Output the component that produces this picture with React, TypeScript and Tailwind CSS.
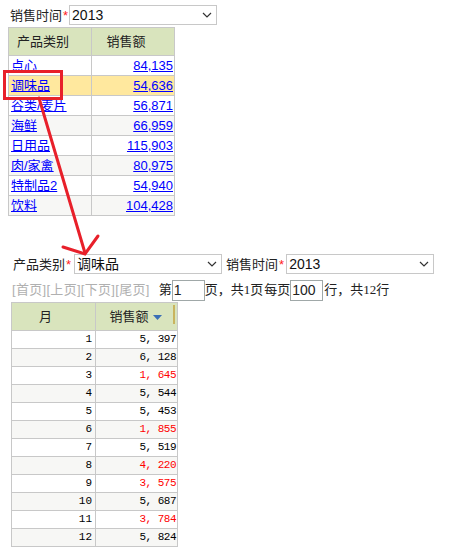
import React from 'react';

const cjk = '"Liberation Sans", "Noto Sans CJK SC", sans-serif';

const categories = [
  { name: '点心', amount: '84,135' },
  { name: '调味品', amount: '54,636', active: true },
  { name: '谷类/麦片', amount: '56,871' },
  { name: '海鲜', amount: '66,959' },
  { name: '日用品', amount: '115,903' },
  { name: '肉/家禽', amount: '80,975' },
  { name: '特制品2', amount: '54,940' },
  { name: '饮料', amount: '104,428' },
];

const months = [
  { m: 1, v: '5, 397' },
  { m: 2, v: '6, 128' },
  { m: 3, v: '1, 645', low: true },
  { m: 4, v: '5, 544' },
  { m: 5, v: '5, 453' },
  { m: 6, v: '1, 855', low: true },
  { m: 7, v: '5, 519' },
  { m: 8, v: '4, 220', low: true },
  { m: 9, v: '3, 575', low: true },
  { m: 10, v: '5, 687' },
  { m: 11, v: '3, 784', low: true },
  { m: 12, v: '5, 824' },
];

function Chevron() {
  return (
    <svg width="10" height="6" viewBox="0 0 10 6" className="shrink-0">
      <path d="M1 1 L5 5 L9 1" fill="none" stroke="#333" strokeWidth="1.2" />
    </svg>
  );
}

function Select({ value }: { value: string }) {
  return (
    <div className="flex h-[20px] w-[148px] items-center justify-between border border-[#c8c8c8] bg-white pl-[2px] pr-[4px]">
      <span className="text-[14px] leading-none text-[#111]">{value}</span>
      <Chevron />
    </div>
  );
}

function Label({ text }: { text: string }) {
  return (
    <span className="flex items-center text-[13px] leading-none text-[#222]">
      {text}
      <span className="ml-[1px] text-[13px] text-[#ff2020]">*</span>
    </span>
  );
}

export default function App() {
  return (
    <div className="relative h-[547px] w-[467px] overflow-hidden bg-white" style={{ fontFamily: cjk }}>
      {/* filter 1 */}
      <div className="flex items-center pl-[10px] pt-[5px]">
        <Label text="销售时间" />
        <div className="ml-[1px]">
          <Select value="2013" />
        </div>
      </div>

      {/* category table */}
      <div className="ml-[8px] mt-[2px] w-[167px] border-l border-t border-[#c8c8c8]">
        <div className="flex h-[28px] bg-[#d9e4bd] text-[13px] text-[#222]">
          <div className="flex w-[83px] items-center justify-center border-b border-r border-[#c8c8c8] pr-[14px]">产品类别</div>
          <div className="flex w-[83px] items-center justify-center border-b border-r border-[#c8c8c8] pr-[14px]">销售额</div>
        </div>
        {categories.map((c, i) => (
          <div
            key={c.name}
            className={
              'flex h-[20px] text-[13px] ' +
              (c.active ? 'bg-[#ffe89e]' : i % 2 === 1 ? 'bg-[#f7f7f5]' : 'bg-white')
            }
          >
            <div className="flex w-[83px] items-center border-b border-r border-[#c8c8c8] pl-[2px]">
              <span className="text-[#0000ff] underline">{c.name}</span>
            </div>
            <div className="flex w-[83px] items-center justify-end border-b border-r border-[#c8c8c8] pr-[1px]">
              <span className="text-[#0000ff] underline">{c.amount}</span>
            </div>
          </div>
        ))}
      </div>

      {/* filter 2 */}
      <div className="mt-[38px] flex items-center pl-[13px]">
        <Label text="产品类别" />
        <div className="ml-[3px]">
          <Select value="调味品" />
        </div>
        <div className="ml-[4px]">
          <Label text="销售时间" />
        </div>
        <div className="ml-[2px]">
          <Select value="2013" />
        </div>
      </div>

      {/* pager */}
      <div className="mt-[5px] flex h-[22px] items-center pl-[12px] text-[13px] text-[#222]">
        <span className="tracking-[0.3px] text-[#b0b0b0]">[首页][上页][下页][尾页]</span>
        <span className="ml-[9px]">第</span>
        <div className="flex h-[21px] w-[33px] items-center border border-[#a0a8a8] pl-[1px] text-[14px]">1</div>
        <span>页，共</span>
        <span style={{ fontFamily: '"Liberation Serif", serif' }}>1</span>
        <span>页</span>
        <span className="ml-[1px]">每页</span>
        <div className="flex h-[21px] w-[33px] items-center border border-[#a0a8a8] pl-[1px] text-[14px]">100</div>
        <span className="ml-[1px]">行，共</span>
        <span style={{ fontFamily: '"Liberation Serif", serif' }}>12</span>
        <span>行</span>
      </div>

      {/* month table */}
      <div className="ml-[11px] mt-[1px] w-[167px] border-l border-t border-[#c8c8c8]">
        <div className="flex h-[28px] bg-[#d9e4bd] text-[13px] text-[#222]">
          <div className="flex w-[84px] items-center justify-center border-b border-r border-[#c8c8c8] pr-[16px]">月</div>
          <div className="relative flex w-[82px] items-center justify-center border-b border-r border-[#c8c8c8] pr-[2px]">
            销售额
            <svg width="9" height="5" viewBox="0 0 9 5" className="ml-[4px] mt-[2px]">
              <path d="M0 0 L9 0 L4.5 5 Z" fill="#3b6fb6" />
            </svg>
            <div className="absolute right-[2px] top-[2px] h-[19px] w-[2px] bg-[#c9b45e]" />
          </div>
        </div>
        {months.map((r, i) => (
          <div
            key={r.m}
            className={'flex h-[18px] text-[11px] ' + (i % 2 === 1 ? 'bg-[#f7f7f5]' : 'bg-white')}
            style={{ fontFamily: '"Liberation Mono", monospace' }}
          >
            <div className="flex w-[84px] items-center justify-end border-b border-r border-[#c8c8c8] pr-[3px] text-black">{r.m}</div>
            <div
              className={
                'flex w-[82px] items-center justify-end border-b border-r border-[#c8c8c8] pr-[1px] tracking-[-0.5px] ' +
                (r.low ? 'text-[#ff0000]' : 'text-black')
              }
            >
              {r.v}
            </div>
          </div>
        ))}
      </div>

      {/* annotation overlay */}
      <div className="pointer-events-none absolute left-[3px] top-[70px] h-[30px] w-[60px] border-[3px] border-[#e8202a]" />
      <svg className="pointer-events-none absolute left-0 top-0" width="467" height="547">
        <g stroke="#e8202a" strokeWidth="3" strokeLinecap="round" fill="none">
          <path d="M39 98 L85 253" />
          <path d="M63 247 L85 254 L98 236" />
        </g>
      </svg>
    </div>
  );
}
